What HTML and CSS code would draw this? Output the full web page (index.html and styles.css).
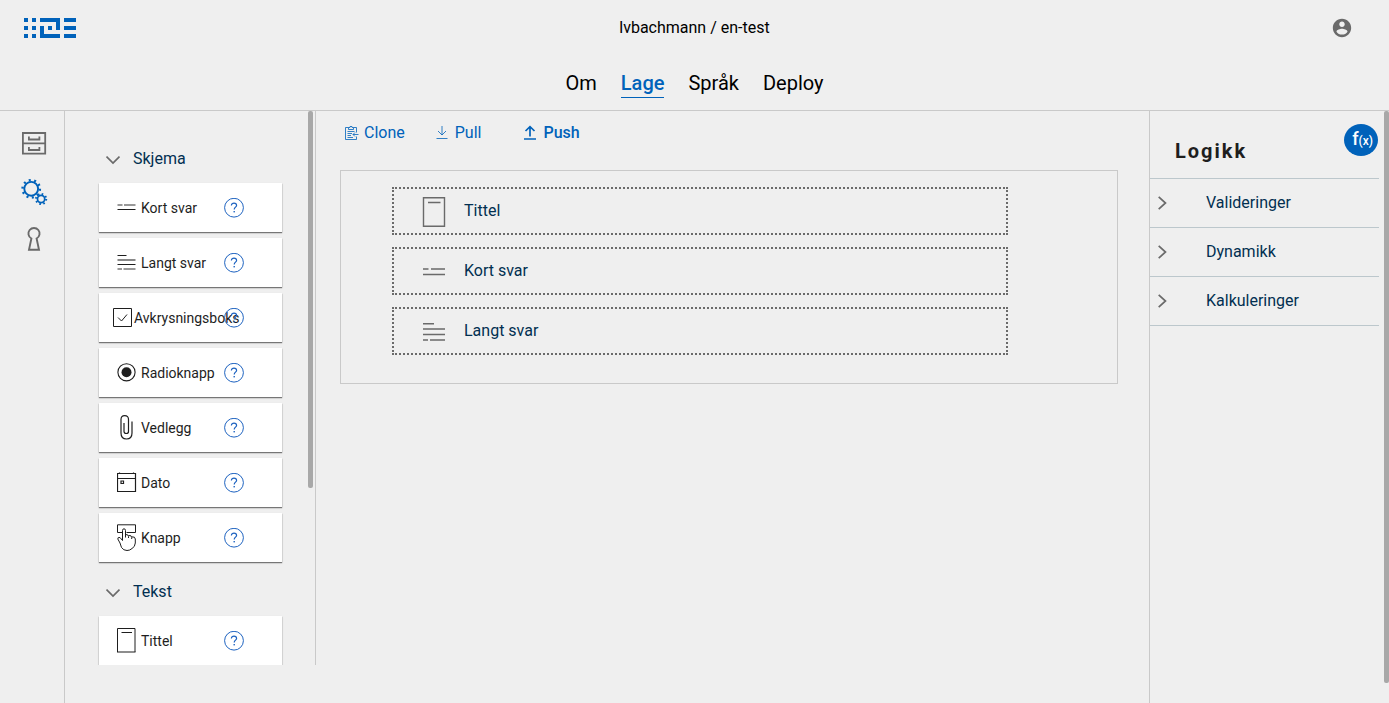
FILE: index.html
```
<!DOCTYPE html>
<html lang="nb">
<head>
<meta charset="utf-8">
<meta name="viewport" content="width=device-width, initial-scale=1">
<title>lvbachmann / en-test</title>
<link rel="stylesheet" href="styles.css">
</head>
<body>
<svg class="sprite" width="0" height="0" aria-hidden="true">
  <symbol id="i-short" viewBox="0 0 20 28"><path d="M.5 11H5.500M7 11H18.500" stroke="currentColor" stroke-width="2" opacity=".45"/><path d="M.5 15.500H18.500" stroke="currentColor"/></symbol>
  <symbol id="i-long" viewBox="0 0 20 28"><path d="M.5 6.500H9.500M.5 15.500H18.500" stroke="currentColor"/><path d="M.5 11H18.500" stroke="currentColor" stroke-width="1.500" opacity=".7"/><path d="M.5 20H5M6.500 20H18.500" stroke="currentColor" stroke-width="2" opacity=".45"/></symbol>
  <symbol id="i-title" viewBox="0 0 20 28"><path d="M.5 25V1.500H18V25M4.500 5.500H15" fill="none" stroke="currentColor"/><path d="M0 25H18.500" stroke="currentColor" stroke-width="2" opacity=".5"/></symbol>
  <symbol id="i-help" viewBox="0 0 20 20"><circle cx="10" cy="9.700" r="9.400" fill="none" stroke="currentColor"/><path d="M7.400 7.600C7.400 6.100 8.500 5.100 10 5.100S12.600 6 12.600 7.400C12.600 9.100 10.200 9.300 10.200 11.500" fill="none" stroke="currentColor" stroke-width="1.200"/><rect x="9.500" y="13" width="1.400" height="1.400" fill="currentColor"/></symbol>
  <symbol id="i-down" viewBox="0 0 14 14"><path d="M0.500 4.500 7 11 13.500 4.500" fill="none" stroke="currentColor" stroke-width="1.700"/></symbol>
  <symbol id="i-right" viewBox="0 0 14 14"><path d="M3.700 0.800 10.500 7 3.700 13.200" fill="none" stroke="currentColor" stroke-width="1.700"/></symbol>
</svg>

<header class="topbar">
  <div class="topbar-row">
    <a class="logo" href="#" aria-label="Altinn Studio">
      <svg width="52" height="20" viewBox="0 0 52 20" fill="currentColor"><path d="M0 0h4v4H0zM8 0h4v4H8zM0 8h4v4H0zM8 8h4v4H8zM0 16h4v4H0zM8 16h4v4H8zM16 0h20v12h-4V4H16zM16 8h4v8h16v4H16zM24 8h4v4h-4zM40 0h12v4H40zM40 8h12v4H40zM40 16h12v4H40z"/></svg>
    </a>
    <div class="repo">lvbachmann / en-test</div>
    <button class="profile" type="button" aria-label="Profil">
      <svg width="22" height="22" viewBox="0 0 24 24" fill="currentColor"><path d="M12 2C6.480 2 2 6.480 2 12s4.480 10 10 10 10-4.480 10-10S17.520 2 12 2zm0 3c1.660 0 3 1.340 3 3s-1.340 3-3 3-3-1.340-3-3 1.340-3 3-3zm0 14.200c-2.500 0-4.710-1.280-6-3.220.030-1.990 4-3.080 6-3.080 1.990 0 5.970 1.090 6 3.080-1.290 1.940-3.500 3.220-6 3.220z"/></svg>
    </button>
  </div>
  <nav class="tabs">
    <a class="tab" href="#">Om</a>
    <a class="tab tab-active" href="#" aria-current="page">Lage</a>
    <a class="tab" href="#">Språk</a>
    <a class="tab" href="#">Deploy</a>
  </nav>
</header>

<div class="workspace">
  <nav class="rail">
    <a class="rail-link" href="#" aria-label="Datamodell"><svg width="28" height="28" viewBox="0 0 28 28" fill="none" stroke="currentColor" stroke-width="1.800"><path d="M2.900 3H25.200V23.600H2.900ZM2.900 13.300H25.200M8.900 6.500v3h10.500v-3M8.900 17v3h10.500v-3"/></svg></a>
    <a class="rail-link rail-active" href="#" aria-label="Lage"><svg width="28" height="28" viewBox="0 0 28 28" fill="none" stroke="currentColor"><circle cx="11.200" cy="10.800" r="6.900" stroke-width="1.900"/><circle cx="11.200" cy="10.800" r="8.700" stroke-width="2.400" stroke-dasharray="2 3.466"/><circle cx="21.100" cy="21" r="3.600" stroke-width="1.700"/><circle cx="21.100" cy="21" r="5.100" stroke-width="2" stroke-dasharray="1.600 2.405"/></svg></a>
    <a class="rail-link" href="#" aria-label="Tilgang"><svg width="28" height="28" viewBox="0 0 28 28" fill="none" stroke="currentColor" stroke-width="1.900"><path d="M11.400 12.500A5.600 5.600 0 1 1 16.600 12.500L19 23.700H9Z"/></svg></a>
  </nav>

  <aside class="toolbox">
    <div class="toolbox-scroll">
      <button class="group" type="button" aria-expanded="true"><svg width="14" height="14"><use href="#i-down"/></svg>Skjema</button>
      <div class="card"><div class="card-name"><svg width="20" height="28"><use href="#i-short"/></svg>Kort svar</div><button class="help" type="button" aria-label="Hjelp"><svg width="20" height="20"><use href="#i-help"/></svg></button></div>
      <div class="card"><div class="card-name"><svg width="20" height="28"><use href="#i-long"/></svg>Langt svar</div><button class="help" type="button" aria-label="Hjelp"><svg width="20" height="20"><use href="#i-help"/></svg></button></div>
      <div class="card"><div class="card-name card-name-long"><svg width="20" height="28" viewBox="0 0 20 28" fill="none" stroke="currentColor"><path d="M.5 4.500H18.500V22.500H.5ZM5 13.500 8.500 17 14 10.500"/></svg>Avkrysningsboks</div><button class="help" type="button" aria-label="Hjelp"><svg width="20" height="20"><use href="#i-help"/></svg></button></div>
      <div class="card"><div class="card-name"><svg width="20" height="28" viewBox="0 0 20 28"><circle cx="9.500" cy="13.300" r="8.600" fill="none" stroke="currentColor" stroke-width="1.100"/><circle cx="9.500" cy="13.300" r="5" fill="currentColor"/></svg>Radioknapp</div><button class="help" type="button" aria-label="Hjelp"><svg width="20" height="20"><use href="#i-help"/></svg></button></div>
      <div class="card"><div class="card-name"><svg width="20" height="28" viewBox="0 0 20 28" fill="none" stroke="currentColor" stroke-width="1.200"><path d="M11.500 8V17.500Q11.500 19.500 9.300 19.500T7 17.500V9M11.500 9V5.500Q11.500 1.700 7.700 1.700T4 5.500V19Q4 25 9.500 25T15 19V7.500"/></svg>Vedlegg</div><button class="help" type="button" aria-label="Hjelp"><svg width="20" height="20"><use href="#i-help"/></svg></button></div>
      <div class="card"><div class="card-name"><svg width="20" height="28" viewBox="0 0 20 28" fill="none" stroke="currentColor"><path d="M.5 4.500H18.500V22.500H.5ZM.5 9.500H18.500M2.500 3.500V5M16.500 3.500V5M4 12H6.500V14.500H4Z" stroke-width="1.200"/></svg>Dato</div><button class="help" type="button" aria-label="Hjelp"><svg width="20" height="20"><use href="#i-help"/></svg></button></div>
      <div class="card"><div class="card-name"><svg width="20" height="28" viewBox="0 0 20 28" fill="none" stroke="currentColor"><path d="M5 8.500H.5V.8H18.500V8.500H9.500"/><path d="M5.500 16.500V6.500Q5.500 4.800 7 4.800T8.500 6.500V13.500M8.500 10.500Q11.500 10.300 11.500 12.500V14M11.500 11.500Q14.700 11 14.700 13.500V15M14.700 12.800Q18.300 12.500 18.300 15V19Q18 23 15 24.500 13 26.500 10 26.500 6.500 26.500 4.500 23.500L3 19 .8 15Q.5 13 3 13.500L5.500 16.500"/></svg>Knapp</div><button class="help" type="button" aria-label="Hjelp"><svg width="20" height="20"><use href="#i-help"/></svg></button></div>
      <button class="group" type="button" aria-expanded="true"><svg width="14" height="14"><use href="#i-down"/></svg>Tekst</button>
      <div class="card"><div class="card-name"><svg width="20" height="28"><use href="#i-title"/></svg>Tittel</div><button class="help" type="button" aria-label="Hjelp"><svg width="20" height="20"><use href="#i-help"/></svg></button></div>
    </div>
    <div class="thumb thumb-toolbox"></div>
  </aside>

  <main class="editor">
    <div class="actions">
      <button class="action" type="button"><svg width="16" height="16" viewBox="0 0 16 16" fill="none" stroke="currentColor"><path d="M4.500 2.500H1.500V14.500H12.500V11.500M9.500 2.500H12.500V7.500M4.500 4.500V2.500H6V1.500H8V2.500H9.500V4.500ZM3.500 6.500H10.500M3.500 8.500H8M3.500 10.500H7M3.500 12.500H9M14.500 9.500H9M11 7.500 9 9.500 11 11.500" stroke-width=".8"/></svg>Clone</button>
      <button class="action action-pull" type="button"><svg width="14" height="16" viewBox="0 0 14 16" fill="none" stroke="currentColor"><path d="M7 1V10M3 6 7 10 11 6M1.500 13.500H12.500" stroke-width=".8"/></svg>Pull</button>
      <button class="action action-push" type="button"><svg width="14" height="16" viewBox="0 0 14 16" fill="none" stroke="currentColor"><path d="M7 11.500V2M2.500 6 7 1.700 11.500 6M1 14H13" stroke-width="1.700"/></svg>Push</button>
    </div>
    <section class="canvas">
      <div class="slot"><svg width="24" height="32" viewBox="0 0 24 32" fill="none" stroke="currentColor"><path d="M1.500 2.800H22.500V31.200H1.500ZM6 7.500H18.500" stroke-width="1.400"/></svg>Tittel</div>
      <div class="slot"><svg width="24" height="32" viewBox="0 0 24 32" fill="none" stroke="currentColor"><path d="M1 14H6.500M9 14H23M1 19.500H23" stroke-width="1.500"/></svg>Kort svar</div>
      <div class="slot"><svg width="24" height="32" viewBox="0 0 24 32" fill="none" stroke="currentColor"><path d="M1 8.800H12M1 14H23M1 19.500H23M1 25H6M8 25H23" stroke-width="1.500"/></svg>Langt svar</div>
    </section>
  </main>

  <aside class="logic">
    <div class="logic-head">
      <h2 class="logic-title">Logikk</h2>
      <button class="fx" type="button" aria-label="Logikk"><span class="fx-f">f</span><span class="fx-x">(x)</span></button>
    </div>
    <button class="rule" type="button" aria-expanded="false"><svg width="14" height="14"><use href="#i-right"/></svg>Valideringer</button>
    <button class="rule" type="button" aria-expanded="false"><svg width="14" height="14"><use href="#i-right"/></svg>Dynamikk</button>
    <button class="rule" type="button" aria-expanded="false"><svg width="14" height="14"><use href="#i-right"/></svg>Kalkuleringer</button>
  </aside>
  <div class="thumb thumb-page"></div>
</div>
</body>
</html>
```
FILE: styles.css
```
* { box-sizing: border-box; }
body {
  margin: 0;
  height: 100vh;
  display: flex;
  flex-direction: column;
  overflow: hidden;
  background: #efefef;
  color: #000;
  font: 16px/24px Roboto, sans-serif;
}
button {
  margin: 0;
  padding: 0;
  border: 0;
  background: none;
  color: inherit;
  font: inherit;
  text-align: left;
  cursor: pointer;
}
a { color: inherit; text-decoration: none; }
svg { display: block; flex: none; }
.sprite { position: absolute; }

.topbar { border-bottom: 1px solid #c9c9c9; }
.topbar-row {
  display: grid;
  grid-template-columns: 1fr auto 1fr;
  align-items: center;
  height: 56px;
  padding: 0 36px 0 24px;
}
.logo { color: #0062ba; justify-self: start; }
.repo { padding-left: 12px; }
.profile { justify-self: end; color: #6a6a6a; }
.tabs {
  display: flex;
  justify-content: center;
  gap: 24px;
  padding: 14px 0 12px;
  font-size: 20px;
  line-height: 27px;
}
.tab { border-bottom: 1px solid transparent; }
.tab-active { color: #0062ba; font-weight: 500; border-color: #0062ba; }

.workspace { position: relative; flex: 1; display: flex; min-height: 0; }
.rail {
  width: 65px;
  padding: 9px 4px 0 0;
  border-right: 1px solid #c9c9c9;
}
.rail-link {
  display: flex;
  align-items: center;
  justify-content: center;
  height: 48px;
  padding-left: 8px;
  color: #6a6a6a;
}
.rail-active { color: #0062ba; }

.toolbox {
  position: relative;
  width: 251px;
  margin-bottom: 38px;
  border-right: 1px solid #c9c9c9;
}
.toolbox-scroll {
  height: 100%;
  overflow-y: auto;
  scrollbar-width: none;
  padding: 24px 33px 0 34px;
}
.group {
  display: flex;
  align-items: center;
  gap: 13px;
  width: 100%;
  height: 48px;
  padding-left: 7px;
  color: #022f51;
}
.group svg, .rule svg { color: #6a6a6a; }
.card {
  display: grid;
  grid-template-columns: 125px 20px;
  align-items: center;
  height: 49px;
  margin-bottom: 6px;
  background: #fff;
  box-shadow: 0 1px 1px rgba(0, 0, 0, .45), 0 1px 2px rgba(0, 0, 0, .15);
  color: #1e1e1e;
  font-size: 14px;
}
.card-name {
  display: flex;
  align-items: center;
  gap: 4px;
  min-width: 0;
  padding-left: 18px;
  white-space: nowrap;
}
.card-name-long { gap: 1px; padding-left: 14px; }
.help { color: #1e63c0; }

.editor { flex: 1; min-width: 0; padding: 10px 31px 0 24px; }
.actions { display: flex; height: 49px; padding-left: 4px; color: #0062ba; }
.action { display: flex; align-items: center; gap: 4px; height: 24px; }
.action-pull { margin-left: 30px; gap: 6px; }
.action-push { margin-left: 42px; gap: 6px; font-weight: 500; }
.canvas {
  display: grid;
  gap: 12px;
  padding: 16px 109px 28px 51px;
  border: 1px solid #c9c9c9;
}
.slot {
  display: flex;
  align-items: center;
  gap: 18px;
  height: 48px;
  padding-left: 28px;
  border: 2px dotted #6a6a6a;
  color: #022f51;
}
.slot svg { color: #6a6a6a; }

.logic {
  width: 240px;
  padding-right: 10px;
  border-left: 1px solid #c9c9c9;
}
.logic-head {
  display: flex;
  justify-content: space-between;
  height: 68px;
  padding: 13px 1px 0 25px;
  border-bottom: 1px solid #bcc7cc;
}
.logic-title {
  margin: 15px 0 0;
  color: #1e1e1e;
  font-size: 20px;
  line-height: 24px;
  font-weight: 700;
  letter-spacing: 2px;
}
.fx {
  display: flex;
  align-items: baseline;
  justify-content: center;
  width: 34px;
  height: 32px;
  padding-left: 3px;
  border-radius: 50%;
  background: #0062ba;
  color: #fff;
  font-weight: 500;
  line-height: 30px;
}
.fx-f { font-size: 18px; }
.fx-x { font-size: 12px; }
.rule {
  display: flex;
  align-items: center;
  gap: 37px;
  width: 100%;
  height: 49px;
  padding-left: 5px;
  border-bottom: 1px solid #bcc7cc;
  color: #022f51;
}

.thumb { position: absolute; top: 0; width: 5px; border-radius: 2px; background: #a8a8a8; }
.thumb-toolbox { right: 2px; height: 68%; }
.thumb-page { right: 0; bottom: 20px; }
```
